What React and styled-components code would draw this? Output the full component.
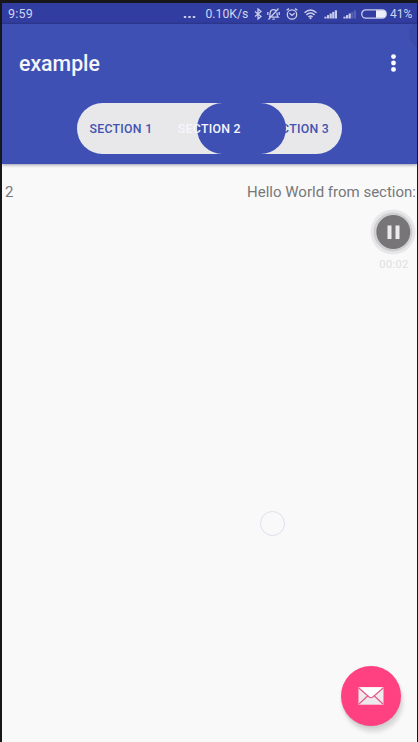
import React from 'react';
import styled, { createGlobalStyle } from 'styled-components';

const Global = createGlobalStyle`
  * { box-sizing: border-box; }
  body { margin: 0; background: #17171a; font-family: Roboto, sans-serif; overflow: hidden; }
`;
const Screen = styled.div`
  position: relative;
  width: 418px;
  height: 742px;
  border-style: solid;
  border-color: #17171a;
  border-width: 3px 1px 0 2px;
  background: #f9f9f9;
  display: flex;
  flex-direction: column;
  overflow: hidden;
`;
const StatusBar = styled.div`
  height: 21px;
  flex: none;
  display: flex;
  align-items: center;
  justify-content: space-between;
  padding: 1px 5px 0 6px;
  background: #313da0;
  box-shadow: inset 0 -1px 1px #2b368f;
  color: #d0d4f0;
  font-size: 12.5px;
  line-height: 20px;
`;
const StatusIcons = styled.div`
  display: flex;
  align-items: center;
`;
const Label = styled.span`
  width: ${p => p.$w}px;
  margin-right: ${p => p.$gap || 0}px;
  font-size: ${p => p.$size || 12.5}px;
  letter-spacing: ${p => p.$spacing || 0}px;
  white-space: nowrap;
`;
const Icon = styled.svg`
  display: block;
  flex: none;
  width: ${p => p.$w}px;
  height: ${p => p.$h || 12}px;
  margin-right: ${p => p.$gap || 0}px;
  fill: none;
  stroke: #c9cdec;
  stroke-width: 1.3;
`;
const AppBar = styled.header`
  position: relative;
  height: 140px;
  flex: none;
  background: #3f50b4;
  box-shadow: 0 1px 3px rgba(60, 60, 90, 0.5);
`;
const Toolbar = styled.div`
  height: 78.5px;
  display: flex;
  align-items: center;
  justify-content: space-between;
  padding: 0 20px 0 17px;
`;
const Title = styled.h1`
  margin: 1px 0 0;
  font-size: 21.3px;
  line-height: 28px;
  font-weight: 500;
  color: #f4f5fb;
`;
const MenuButton = styled.button`
  padding: 0;
  border: 0;
  background: none;
`;
const Tabs = styled.div`
  position: relative;
  width: 265px;
  height: 51px;
  margin-left: 75px;
  display: grid;
  grid-template-columns: repeat(3, 1fr);
  align-items: center;
  border-radius: 26px;
  background: #e8e8eb;
  overflow: hidden;
`;
const Indicator = styled.span`
  position: absolute;
  z-index: 1;
  left: 120px;
  top: 0;
  width: 89px;
  height: 51px;
  border-radius: 26px;
  background: #3f50b4;
`;
const Tab = styled.span`
  position: relative;
  z-index: ${p => (p.$active ? 2 : 0)};
  padding: 1px 0 0 12.5px;
  font-size: 12.3px;
  letter-spacing: 0.28px;
  line-height: 16px;
  font-weight: 500;
  white-space: nowrap;
  color: ${p => (p.$active ? '#f6f6fc' : '#4352b0')};
`;
const Content = styled.main`
  flex: 1;
  display: flex;
  flex-direction: column;
  align-items: flex-end;
`;
const Message = styled.p`
  width: 100%;
  margin: 18px 0 0;
  padding: 0 1px 0 3px;
  display: flex;
  justify-content: space-between;
  font-size: 15px;
  line-height: 20px;
  color: #77777a;
  white-space: nowrap;
`;
const Recorder = styled.div`
  width: 46px;
  margin: 7px 1px 0 0;
  display: flex;
  flex-direction: column;
  align-items: center;
`;
const PauseButton = styled.button`
  width: 46px;
  height: 46px;
  padding: 0;
  border: 0;
  background: none;
`;
const Timer = styled.span`
  margin: 2px 0 0 2px;
  font-size: 11.2px;
  line-height: 16px;
  letter-spacing: 0.3px;
  color: #dfdfe1;
`;
const Touch = styled.span`
  position: absolute;
  left: 257.5px;
  top: 508px;
  width: 25px;
  height: 25px;
  border: 1.5px solid #dddfee;
  border-radius: 50%;
`;
const Fab = styled.button`
  position: absolute;
  left: 338.5px;
  top: 662.5px;
  width: 60px;
  height: 60px;
  padding: 0;
  border: 0;
  border-radius: 50%;
  background: #ff4081;
  display: flex;
  align-items: center;
  justify-content: center;
  box-shadow: 2px 6px 4px rgba(0, 0, 0, 0.13), 0 1px 3px rgba(0, 0, 0, 0.1);
`;
const Bubble = styled.span`
  position: absolute;
  left: 407px;
  top: 17px;
  width: 28px;
  height: 28px;
  border-radius: 50%;
  background: rgba(35, 45, 110, 0.13);
`;

const Signal = ({ levels, gap }) => (
  <Icon $w={14} $h={10} $gap={gap} viewBox="0 0 14 10">
    {[0, 1, 2, 3, 4].map(i => (
      <path key={i} d={`M${1.5 + i * 2.6} 9.5V${7.7 - i * 1.6}`} strokeWidth="2.2" opacity={i < levels ? 1 : 0.25} />
    ))}
  </Icon>
);

export default function App() {
  return (
    <Screen>
      <Global />
      <StatusBar>
        <Label $w={30} $spacing={0.2}>9:59</Label>
        <StatusIcons>
          <Icon $w={13} $gap={10} viewBox="0 0 13 12">
            <path d="M.8 9h2.4M5.3 9h2.4M9.8 9h2.4" strokeWidth="2.2" />
          </Icon>
          <Label $w={43} $gap={5.5} $size={12.2}>0.10K/s</Label>
          <Icon $w={8} $gap={5} viewBox="0 0 8 12">
            <path d="M1 3.5l6 5L4 11V1l3 2.5-6 5" />
          </Icon>
          <Icon $w={13} $gap={6} viewBox="0 0 13 12">
            <path d="M2.2 9.2C3.4 8 2.9 6.5 3.2 4.7 3.5 2.6 5 1.7 6.5 1.7c1.2 0 2 .4 2.6 1.2M9.9 4.5c.2 1.8 0 3.4 1.2 4.7H4.6M5.4 11.2h2.4M1.5 11.5l10-11M.8 4v3M12.2 4v3" />
          </Icon>
          <Icon $w={12} $gap={6} viewBox="0 0 12 12">
            <circle cx="6" cy="6.5" r="4.7" />
            <path d="M3.5 5.2L6 7.4l2.7-2.2M.6 2.3L3 .6M9 .6l2.4 1.7" />
          </Icon>
          <Icon $w={13} $gap={7} viewBox="0 0 13 12">
            <path d="M.5 4.7Q6.5-.8 12.5 4.7M2.4 6.9q4.1-3.7 8.2 0M4.4 9q2.1-1.9 4.2 0" strokeWidth="1.5" />
            <circle cx="6.5" cy="10.2" r="1.1" fill="#c9cdec" stroke="none" />
          </Icon>
          <Signal levels={5} gap={5} />
          <Signal levels={3} gap={4} />
          <Icon $w={26} $h={10} $gap={3} viewBox="0 0 26 10">
            <rect x=".7" y=".8" width="24.6" height="8.4" rx="4.2" />
            <path d="M15 1.3h6.3a3.7 3.7 0 0 1 0 7.4H15z" fill="#eceefa" stroke="none" />
          </Icon>
          <Label $w={22} $size={12}>41%</Label>
        </StatusIcons>
      </StatusBar>
      <AppBar>
        <Toolbar>
          <Title>example</Title>
          <MenuButton aria-label="More options">
            <Icon $w={7} $h={18} viewBox="0 0 7 18">
              <g fill="#fff" stroke="none">
                <circle cx="3.5" cy="2.6" r="2.4" />
                <circle cx="3.5" cy="9" r="2.4" />
                <circle cx="3.5" cy="15.4" r="2.4" />
              </g>
            </Icon>
          </MenuButton>
        </Toolbar>
        <Tabs>
          <Tab>SECTION 1</Tab>
          <Tab $active>SECTION 2</Tab>
          <Tab>SECTION 3</Tab>
          <Indicator />
        </Tabs>
      </AppBar>
      <Content>
        <Message><span>2</span><span>Hello World from section:</span></Message>
        <Recorder>
          <PauseButton aria-label="Pause">
            <Icon $w={46} $h={46} viewBox="0 0 46 46">
              <g stroke="none">
                <circle cx="23" cy="23" r="22.5" fill="#e7e7e9" />
                <circle cx="23" cy="23" r="19.5" fill="#cfcfd1" />
                <circle cx="23.3" cy="23" r="17" fill="#787579" />
                <path d="M17.5 16.5h4v13.5h-4zM25.5 16.5h4v13.5h-4z" fill="#ececee" />
              </g>
            </Icon>
          </PauseButton>
          <Timer>00:02</Timer>
        </Recorder>
      </Content>
      <Bubble />
      <Touch />
      <Fab aria-label="Mail">
        <Icon $w={26} $h={18} viewBox="0 0 26 18">
          <rect x=".5" y=".3" width="25" height="17.4" fill="#eeeaec" stroke="none" />
          <path d="M1 .3h24L14.5 10Q13 11 11.5 10z" fill="#fff" stroke="none" />
          <path d="M.8 1l10.4 9q1.8 1.4 3.6 0L25.2 1M1 17l8.6-8M25 17l-8.6-8" stroke="#e5548a" strokeWidth="1.1" />
        </Icon>
      </Fab>
    </Screen>
  );
}
